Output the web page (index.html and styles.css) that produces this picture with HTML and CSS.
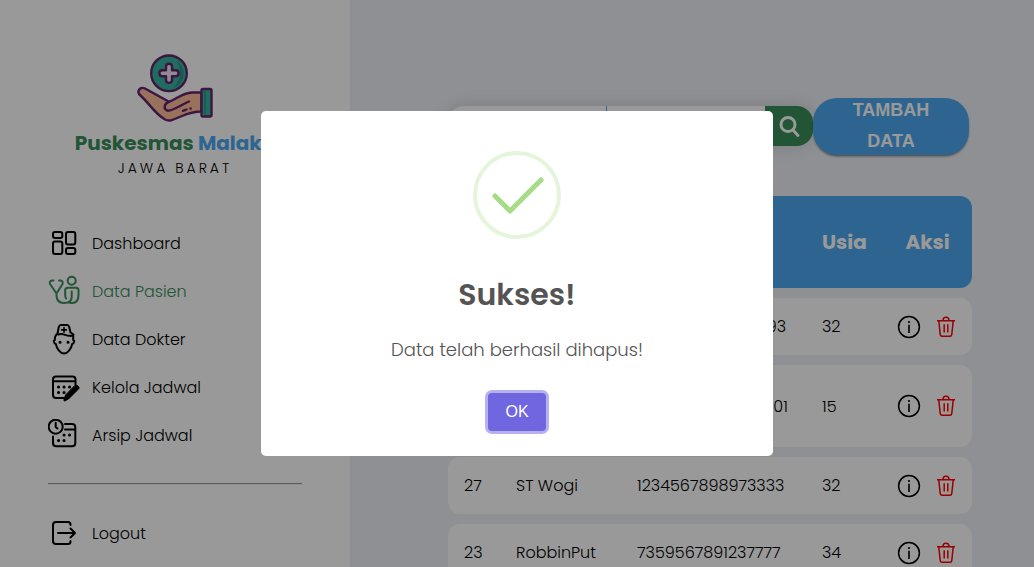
FILE: index.html
```html
<!DOCTYPE html>
<html lang="id">
<head>
<meta charset="utf-8">
<meta name="viewport" content="width=device-width, initial-scale=1">
<title>Puskesmas Malaka - Data Pasien</title>
<link rel="stylesheet" href="styles.css">
</head>
<body>
<svg class="sprite" aria-hidden="true">
  <symbol id="info" viewBox="0 0 24 24">
    <circle cx="12" cy="12" r="10.4" fill="none" stroke="#000" stroke-width="1.5"/>
    <path d="M12 9.800V18" stroke="#000" stroke-width="1.6"/>
    <circle cx="12" cy="7" r="1.1"/>
  </symbol>
  <symbol id="trash" viewBox="0 0 24 24">
    <g fill="none" stroke="#f00" stroke-width="1.5" stroke-linejoin="round">
      <path d="M3 5.7H21M9 5.5C9 1.3 15 1.3 15 5.5M4.8 6L6.2 19.4Q6.4 21.3 8.2 21.3H15.8Q17.6 21.3 17.8 19.4L19.2 6M10.2 9.3V17.6M13.8 9.3V17.6"/>
    </g>
  </symbol>
</svg>
<div class="layout">
  <aside class="sidebar">
    <div class="brand">
      <svg class="brand-logo" viewBox="0 0 80 80" aria-hidden="true">
        <g stroke="#62256b" stroke-width="2.4" stroke-linejoin="round" stroke-linecap="round">
          <circle cx="34" cy="25.3" r="17.8" fill="#37b5a0"/>
          <path d="M41 12.5A15 15 0 0 1 38 40A20 20 0 0 0 41 12.5" fill="#2c9386" stroke="none"/>
          <path d="M31 18.5Q31 15.7 34 15.7T37 18.5V22.3H40.8Q43.6 22.3 43.6 25.3T40.8 28.3H37V32.1Q37 34.9 34 34.9T31 32.1V28.3H27.2Q24.4 28.3 24.4 25.3T27.2 22.3H31Z" fill="#f3e6f4"/>
          <path d="M4 46C2 42 6 38.500 10 40.500L34 53.800C42 51 47 45 57 44.500H66.500V63.500C53 63.500 49 68 36 72.300Q33 73 30 71.500C19 65 16 57 4 46Z" fill="#ffbd9b"/>
          <path d="M34 53.800C29 55.500 28 61 32.500 62.700C37 63.500 48 56 54 53.500" fill="none"/>
          <path d="M48 62.800L51.500 61.500M55.500 60.500H55.700" fill="none"/>
          <rect x="66.500" y="41" width="10" height="27.500" rx="1.500" fill="#37b5a0"/>
          <path d="M70 43V66.500" stroke="#2c9386" stroke-width="1.500"/>
        </g>
      </svg>
      <h1 class="brand-name">Puskesmas <span class="brand-accent">Malaka</span></h1>
      <p class="brand-region">JAWA BARAT</p>
    </div>
    <nav class="menu">
      <a class="menu-link" href="#">
        <svg class="menu-icon" viewBox="0 0 32 32" aria-hidden="true"><rect x="5" y="5" width="9.300" height="6" rx="2"/><rect x="18" y="5" width="9.300" height="12.500" rx="2"/><rect x="5" y="14.500" width="9.300" height="12.500" rx="2"/><rect x="18" y="21" width="9.300" height="6" rx="2"/></svg>
        Dashboard</a>
      <a class="menu-link active" href="#">
        <svg class="menu-icon" viewBox="0 0 32 32" aria-hidden="true"><path d="M5.500 5.500H4Q1 6 2 9L8.500 18.500L14.500 9Q15.500 6 12.500 5.500H11M8.500 18.500V20.500C8.500 25.500 11.500 28 16 28C21 28 23.700 26 23.700 22V16.500M18 23.500Q17.200 22 17.200 20V15.200Q17.200 12.700 19.700 12.700H28Q30.500 12.700 30.500 15.200V20C30.500 25.500 28 28 24 28Q22 28 20.500 27"/><circle cx="23.700" cy="5.700" r="4"/></svg>
        Data Pasien</a>
      <a class="menu-link" href="#">
        <svg class="menu-icon" viewBox="0 0 32 32" aria-hidden="true"><path d="M9.500 10.500L10.800 4Q11.300 2 13 2H19Q20.700 2 21.200 4L22.500 9.500L25.500 11.500Q24.500 13.200 21.500 12.800C17 12.500 15 10 10.500 11.500M9.500 10.500Q6.500 13 6.800 17L5.700 18Q6 20.500 7.800 21C8.800 26 12.500 30.500 16 30.500S23.200 26 24.200 21Q26 20.500 26.300 18L25.200 17V12"/><path class="fine" d="M16 4.500V9.300M13.600 6.900H18.400"/><path class="dots" d="M12 19.200H12.100M20 19.200H20.100"/></svg>
        Data Dokter</a>
      <a class="menu-link" href="#">
        <svg class="menu-icon" viewBox="0 0 32 32" aria-hidden="true"><path d="M15.500 27H8Q5 27 5 24V8.500Q5 5.500 8 5.500H24.500Q27.500 5.500 27.500 8.500V13.500M5 10.300H27.500"/><path class="dots" d="M10.500 16H10.600M16 16H16.100M21.500 16H21.600M10.500 21.500H10.600M16 21.500H16.100"/><path class="solid" d="M27 14.500Q29 13.700 30.500 15.500T30 18.500L20.500 28L16.700 30Q15.500 30 16 28.500L17.500 24.300Z"/></svg>
        Kelola Jadwal</a>
      <a class="menu-link" href="#">
        <svg class="menu-icon" viewBox="0 0 32 32" aria-hidden="true"><circle cx="7.700" cy="7.700" r="7"/><path d="M7.700 3.700V8L9.500 9.500M17 5H24Q27.300 5 27.300 8.300V24Q27.300 27.300 24 27.300H8.300Q5 27.300 5 24V17.500M17 10.500H27"/><path class="dots" d="M16 16H16.100M21.500 16H21.600M10.500 21.500H10.600M16 21.500H16.100"/></svg>
        Arsip Jadwal</a>
      <hr class="menu-rule">
      <a class="menu-link" href="#">
        <svg class="menu-icon" viewBox="0 0 32 32" aria-hidden="true"><path d="M22.500 8V7.500Q22.500 5 20 5H8Q5 5 5 8V24Q5 27 8 27H20Q22.500 27 22.500 24.500V24M10 16H27M22.500 11.500L27 16L22.500 20.500"/></svg>
        Logout</a>
    </nav>
  </aside>
  <main class="content">
    <div class="toolbar">
      <form class="search">
        <select class="search-field" aria-label="Kolom pencarian"><option>Nama</option></select>
        <input class="search-input" type="search" aria-label="Cari pasien">
        <button class="search-button" type="button" aria-label="Cari">
          <svg class="search-icon" viewBox="0 0 24 24" aria-hidden="true"><circle cx="11" cy="10.500" r="7"/><path d="M16 16L21 21.500"/></svg>
        </button>
      </form>
      <button class="add-button" type="button">TAMBAH DATA</button>
    </div>
    <table class="patients">
      <colgroup><col class="col-id"><col class="col-name"><col><col class="col-age"><col class="col-action"></colgroup>
      <thead><tr><th>ID</th><th>Nama</th><th>NIK</th><th>Usia</th><th>Aksi</th></tr></thead>
      <tbody>
        <tr><td>29</td><td>Pasien</td><td>3204567890133493</td><td>32</td><td><div class="actions"><a href="#" aria-label="Detail"><svg class="action-icon"><use href="#info"/></svg></a><a href="#" aria-label="Hapus"><svg class="action-icon"><use href="#trash"/></svg></a></div></td></tr>
        <tr><td>28</td><td>Pasien<br>Baru</td><td>3206548890236401</td><td>15</td><td><div class="actions"><a href="#" aria-label="Detail"><svg class="action-icon"><use href="#info"/></svg></a><a href="#" aria-label="Hapus"><svg class="action-icon"><use href="#trash"/></svg></a></div></td></tr>
        <tr><td>27</td><td>ST Wogi</td><td>1234567898973333</td><td>32</td><td><div class="actions"><a href="#" aria-label="Detail"><svg class="action-icon"><use href="#info"/></svg></a><a href="#" aria-label="Hapus"><svg class="action-icon"><use href="#trash"/></svg></a></div></td></tr>
        <tr><td>23</td><td>RobbinPut</td><td>7359567891237777</td><td>34</td><td><div class="actions"><a href="#" aria-label="Detail"><svg class="action-icon"><use href="#info"/></svg></a><a href="#" aria-label="Hapus"><svg class="action-icon"><use href="#trash"/></svg></a></div></td></tr>
      </tbody>
    </table>
  </main>
</div>
<div class="overlay">
  <div class="modal" role="dialog" aria-modal="true" aria-labelledby="modal-title">
    <svg class="modal-icon" viewBox="0 0 88 88" aria-hidden="true">
      <circle cx="44" cy="44" r="42" fill="none" stroke="#e4f5db" stroke-width="4"/>
      <path d="M22 45L37 60L68 29" fill="none" stroke="#a5dc86" stroke-width="5" stroke-linecap="round" stroke-linejoin="round"/>
    </svg>
    <h2 class="modal-title" id="modal-title">Sukses!</h2>
    <p class="modal-text">Data telah berhasil dihapus!</p>
    <button class="modal-button" type="button">OK</button>
  </div>
</div>
</body>
</html>
```
FILE: styles.css
```css
* { box-sizing: border-box; }
body {
  margin: 0;
  height: 100vh;
  overflow: hidden;
  background: #eff1f6;
  color: #000;
  font-family: Poppins, Inter, "Open Sans", sans-serif;
  font-size: 16px;
  font-weight: 300;
}
.sprite { display: none; }
.layout { display: flex; height: 100vh; overflow: hidden; }

.sidebar { flex: 0 0 350px; padding: 48px 48px 0; background: #fff; }
.brand { display: flex; flex-direction: column; align-items: center; white-space: nowrap; }
.brand-logo { width: 80px; height: 80px; }
.brand-name { margin: 0; color: #388e5a; font-size: 20px; font-weight: 700; line-height: 30px; }
.brand-accent { color: #4da9f0; }
.brand-region { margin: 0; font-size: 14px; letter-spacing: 3px; line-height: 20px; }
.menu { display: flex; flex-direction: column; gap: 16px; margin-top: 49px; }
.menu-link { display: flex; align-items: center; gap: 12px; height: 32px; color: #000; text-decoration: none; }
.menu-link.active { color: #388e5a; }
.menu-icon { width: 32px; height: 32px; fill: none; stroke: currentColor; stroke-width: 2; stroke-linecap: round; stroke-linejoin: round; }
.menu-icon .dots { stroke-width: 3; }
.menu-icon .fine { stroke-width: 1.6; }
.menu-icon .solid { fill: currentColor; stroke-width: 1; }
.menu-rule { width: 100%; margin: 16px 0; border: 0; border-top: 1px solid #999; border-bottom: 1px solid #eee; }

.content { flex: 1; min-width: 0; padding: 98px 62px 0 98px; }
.toolbar { display: flex; align-items: flex-start; }
.search { display: flex; flex: 1; height: 40px; margin-top: 8px; border-radius: 16px; box-shadow: 0 0 20px rgba(0, 0, 0, .15); }
.search-field { flex: 1; min-width: 0; padding: 0 16px; border: 0; border-right: 1px solid #4da9f0; border-radius: 16px 0 0 16px; background: #fff; }
.search-input { flex: 1; min-width: 0; padding: 0 16px; border: 0; background: #fff; }
.search-button { display: grid; place-items: center; width: 48px; padding: 0; border: 0; border-radius: 0 16px 16px 0; background: #388e5a; }
.search-icon { width: 24px; height: 24px; fill: none; stroke: #fff; stroke-width: 3; stroke-linecap: round; }
.add-button { display: flex; align-items: center; justify-content: center; width: 156px; height: 57px; margin-right: 3px; padding: 0 24px 2px; border: 0; border-radius: 24px; background: #4da9f0; box-shadow: 0 2px 3px -1px rgba(0, 0, 0, .6); color: #fff; font: bold 18px/31px "Liberation Sans", Arial, sans-serif; }

.patients { width: 100%; margin-top: 31px; border-spacing: 0 10px; table-layout: fixed; }
.col-id { width: 52px; }
.col-name { width: 121px; }
.col-age { width: 77px; }
.col-action { width: 89px; }
.patients th { height: 92px; padding: 0 16px; background: #4da9f0; color: #fff; font-size: 20px; font-weight: 700; text-align: left; }
.patients th:last-child { text-align: center; }
.patients td { height: 57px; padding: 16px; background: #fff; line-height: 25px; }
.patients th:first-child, .patients td:first-child { border-radius: 12px 0 0 12px; }
.patients th:last-child, .patients td:last-child { border-radius: 0 12px 12px 0; }
.patients td:last-child { padding: 16px 8px; }
.actions { display: flex; justify-content: center; gap: 13px; }
.actions a { display: block; height: 24px; }
.action-icon { display: block; width: 24px; height: 24px; }

.overlay { position: fixed; inset: 0; display: grid; place-items: center; background: rgba(0, 0, 0, .4); }
.modal { display: flex; flex-direction: column; align-items: center; width: 512px; max-width: 96%; padding: 40px 24px 25px; border-radius: 5px; background: #fff; color: #545454; }
.modal-icon { width: 88px; height: 88px; }
.modal-title { margin: 32px 0 0; font-size: 30px; font-weight: 600; line-height: 48px; }
.modal-text { margin: 17px 0 0; font-size: 18px; line-height: 28px; }
.modal-button { margin-top: 29px; padding: 0 17px; height: 38px; border: 0; border-radius: 4px; background: #7066e0; box-shadow: 0 0 0 3px #b7b2ef; color: #fff; font: 400 16px "Liberation Sans", Arial, sans-serif; }
```
